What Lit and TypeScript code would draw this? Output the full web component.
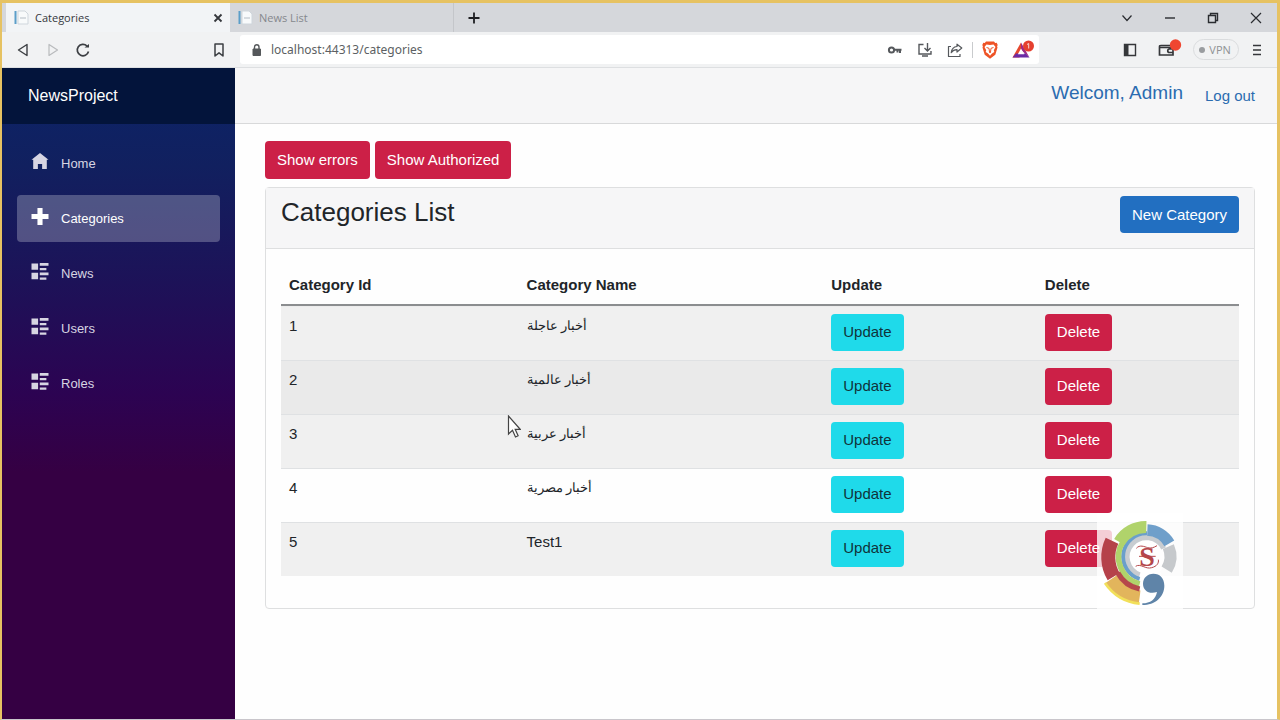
import { LitElement, html, css, svg } from "lit";
import { customElement, property } from "lit/decorators.js";

type IconName = "home" | "plus" | "list";

const navIcons = {
  home: svg`<path d="M4 0l-4 3.200h.8v4.300h2.200v-2.300h2v2.300h2.200v-4.300h.8z"/>`,
  plus: svg`<path d="M2.800 0v2.800h-2.800v2.400h2.800v2.800h2.400v-2.800h2.800v-2.400h-2.800v-2.800z"/>`,
  list: svg`<path d="M0 .2v3h3.100v-3zM3.900 0v1.300h4.100v-1.300zM3.900 2.300v1.100h3.100v-1.100zM0 4.600v3.100h3.100v-3.100zM3.900 4.500v1.300h4.100v-1.300zM3.900 6.800v1.100h3.100v-1.100z"/>`,
};

@customElement("browser-chrome")
class BrowserChrome extends LitElement {
  static styles = css`
    :host {
      display: block;
      font-family: "Open Sans", "Noto Sans", sans-serif;
      color: #3c3f43;
    }
    button {
      display: grid;
      place-items: center;
      border: 0;
      padding: 0;
      margin: 0;
      background: none;
      color: inherit;
      font: inherit;
    }
    svg {
      display: block;
      fill: none;
      stroke: currentColor;
    }
    .tabs {
      display: flex;
      height: 29px;
      padding-left: 4px;
      background: #d5d7db;
    }
    .tab {
      display: flex;
      align-items: center;
      gap: 6px;
      flex: 0 1 224px;
      box-sizing: border-box;
      padding: 0 6px 0 8px;
      font-size: 11px;
      color: #85888d;
      border-right: 1px solid #c4c6ca;
    }
    .tab.active {
      background: #f2f4f6;
      color: #35383c;
      border-right: 0;
    }
    .title {
      flex: 1;
    }
    .add {
      width: 40px;
      color: #1e1f22;
    }
    .window {
      display: flex;
      margin-left: auto;
      color: #2a2c30;
    }
    .window button {
      width: 43px;
    }
    .toolbar {
      display: flex;
      align-items: center;
      height: 36px;
      box-sizing: border-box;
      background: #f1f2f3;
      border-bottom: 1px solid #dddfe1;
    }
    .nav {
      display: flex;
      align-items: center;
      width: 238px;
      box-sizing: border-box;
      padding: 0 8px 0 6px;
    }
    .nav button {
      width: 30px;
    }
    .nav .mark {
      margin-left: auto;
      width: 26px;
    }
    .disabled {
      color: #b9bbbd;
    }
    .address {
      display: flex;
      align-items: center;
      flex: 1;
      height: 29px;
      padding: 0 4px 0 10px;
      gap: 8px;
      background: #fff;
      border-radius: 3px;
      box-sizing: border-box;
    }
    .address input {
      flex: 1;
      min-width: 0;
      border: 0;
      padding: 0;
      outline: 0;
      background: none;
      font: 12px "Noto Sans", "Open Sans", sans-serif;
      color: #5c5f63;
    }
    .actions {
      display: flex;
      align-items: center;
      color: #55585c;
    }
    .actions button {
      width: 30px;
    }
    .rule {
      width: 1px;
      height: 16px;
      margin: 0 2px;
      background: #c9cbcd;
    }
    .side {
      display: flex;
      align-items: center;
      width: 238px;
      box-sizing: border-box;
      padding: 0 12px 0 76px;
      color: #35373a;
      justify-content: space-between;
    }
    .side .vpn {
      display: flex;
      align-items: center;
      gap: 4px;
      height: 21px;
      padding: 0 7px 0 5px;
      border: 1px solid #dadcde;
      border-radius: 11px;
      font-size: 11px;
      color: #8e9194;
    }
    .dot {
      width: 6px;
      height: 6px;
      border-radius: 50%;
      background: #999c9f;
    }
  `;

  private page() {
    return html`<svg width="15" height="15" viewBox="0 0 15 15" aria-hidden="true">
      <path d="M4 1h7l3 3v10H4z" fill="#f8fafb" stroke="#cfd6dc" stroke-width="1" />
      <path d="M6 8h6" stroke="#b4bcc4" />
      <path d="M1.500 1v13" stroke="#5b9ec9" stroke-width="2" />
    </svg>`;
  }

  render() {
    return html`
      <div class="tabs">
        <div class="tab active">
          ${this.page()}<span class="title">Categories</span>
          <button aria-label="Close tab">
            <svg width="12" height="12" viewBox="0 0 12 12" stroke-width="1.8"><path d="M2.500 2.500l7 7m0-7l-7 7" /></svg>
          </button>
        </div>
        <div class="tab">${this.page()}<span class="title">News List</span></div>
        <button class="add" aria-label="New tab">
          <svg width="14" height="14" viewBox="0 0 14 14" stroke-width="1.8"><path d="M7 1.500v11M1.500 7h11" /></svg>
        </button>
        <div class="window">
          <button aria-label="Search tabs">
            <svg width="14" height="14" viewBox="0 0 14 14" stroke-width="1.2"><path d="M2.500 4.500L7 9.500l4.500-5" /></svg>
          </button>
          <button aria-label="Minimize">
            <svg width="14" height="14" viewBox="0 0 14 14" stroke-width="1.4"><path d="M2 7h10" /></svg>
          </button>
          <button aria-label="Restore">
            <svg width="14" height="14" viewBox="0 0 14 14" stroke-width="1.4"><path d="M2.500 4.500h7v7h-7zM4.500 4.500v-2h7v7h-2" /></svg>
          </button>
          <button aria-label="Close">
            <svg width="14" height="14" viewBox="0 0 14 14" stroke-width="1.2"><path d="M2 2l10 10M12 2L2 12" /></svg>
          </button>
        </div>
      </div>
      <div class="toolbar">
        <div class="nav">
          <button aria-label="Back">
            <svg width="16" height="16" viewBox="0 0 16 16" stroke-width="1.400" stroke-linejoin="round"><path d="M12 2.500v11L3.500 8z" /></svg>
          </button>
          <button class="disabled" aria-label="Forward">
            <svg width="16" height="16" viewBox="0 0 16 16" stroke-width="1.200" stroke-linejoin="round"><path d="M4 2.500v11L12.500 8z" /></svg>
          </button>
          <button aria-label="Reload">
            <svg width="16" height="16" viewBox="0 0 16 16" stroke-width="1.700"><path d="M13.500 9.500a5.700 5.700 0 1 1-1.500-5.500" /><path d="M9.500 5.500h4.500V2z" fill="currentColor" stroke="none" /></svg>
          </button>
          <button class="mark" aria-label="Bookmark">
            <svg width="14" height="16" viewBox="0 0 14 16" stroke-width="1.500" stroke-linejoin="round"><path d="M3 2h8v12l-4-3.200L3 14z" /></svg>
          </button>
        </div>
        <div class="address">
          <svg width="13" height="14" viewBox="0 0 13 14" color="#55585b"><path d="M3 6h7.500v6.500H3z" fill="currentColor" /><path d="M4.500 6V4a2.200 2.200 0 0 1 4.500 0v2" stroke-width="1.400" /></svg>
          <input aria-label="Address" value="localhost:44313/categories" />
          <div class="actions">
            <button aria-label="Passwords">
              <svg width="16" height="14" viewBox="0 0 16 14" stroke-width="2"><circle cx="4.500" cy="7" r="2.600" /><path d="M7 6.800h7.500M13 7v3M10.500 7v2.500" /></svg>
            </button>
            <button aria-label="Install">
              <svg width="16" height="16" viewBox="0 0 16 16" stroke-width="1.400"><path d="M6.500 2.500H2v9.500h12V9M5 14h6M10.500 1v7.500M7.500 6l3 3 3-3" /></svg>
            </button>
            <button aria-label="Share">
              <svg width="16" height="16" viewBox="0 0 16 16" stroke-width="1.200" stroke-linejoin="round"><path d="M4 4.500H1.500v10H13V12M10 2.200L14.800 6 10 10V7.700c-3 0-4.500 1-5.800 3C4.600 7 6.800 4.800 10 4.500z" /></svg>
            </button>
            <span class="rule"></span>
            <button aria-label="Shields">
              <svg width="18" height="20" viewBox="0 0 18 20" stroke="none"><path d="M5 1.500h8l1.200 1.400 1.500-.2 1 2.300-.6 1.200.4 1.300-2.200 7.300L9 18.800l-5.300-4L1.500 7.500l.4-1.300L1.300 5l1-2.300 1.500.2z" fill="#ee5326" stroke="none" /><path d="M5.500 4.500L9 5l3.500-.5 2 2.500-1.700 3.300.5 1.700-2.300 1.600L9 15.800l-2-2.200L4.700 12l.5-1.700L3.500 7z" fill="#fff" stroke="none" /><path d="M5.500 7.500l2.500.8.5 3.700L9 13l.5-1 .5-3.700 2.500-.8" stroke="#ee5326" stroke-width="1" /></svg>
            </button>
            <button aria-label="Rewards">
              <svg width="30" height="20" viewBox="-7 0 30 20">
                <g stroke="none">
                  <path d="M9 2.500L.5 17.500h7L9 9z" fill="#e5482e" /><path d="M9 2.500l8.500 15L9 10z" fill="#a02a83" /><path d="M.5 17.500h17l-4-4H4z" fill="#6b2aa5" /><path d="M9 8.500l-3.200 5.800h6.500z" fill="#fff" />
                  <circle cx="16.500" cy="6" r="5.500" fill="#e5402f" />
                </g>
                <path d="M15 4.500l1.700-1v5" fill="none" stroke="#fbd5d0" stroke-width="1" />
              </svg>
            </button>
          </div>
        </div>
        <div class="side">
          <button aria-label="Sidebar">
            <svg width="30" height="16" viewBox="0 0 30 16" stroke-width="1.400"><path d="M9.500 2.500h11v11h-11z" /><path d="M9 2h4.500v12H9z" fill="currentColor" stroke="none" /></svg>
          </button>
          <button aria-label="Wallet">
            <svg width="28" height="22" viewBox="-2 0 28 22" stroke-width="1.700"><path d="M16 6.500H4c-1.500 0-1.500 0-1.500 2v7.500h13.500v-2.500M2.500 8.500h13M16 10h-3.500a1.700 1.700 0 0 0 0 3.500h3.500z" /><circle cx="18.500" cy="6" r="5.700" fill="#ef4630" stroke="none" /></svg>
          </button>
          <button class="vpn"><span class="dot"></span>VPN</button>
          <button aria-label="Menu">
            <svg width="16" height="14" viewBox="4 0 16 14" stroke-width="1.600"><path d="M8 2.500h8M8 7h8M8 11.500h8" /></svg>
          </button>
        </div>
      </div>
    `;
  }
}

@customElement("nav-menu")
class NavMenu extends LitElement {
  static styles = css`
    :host {
      display: block;
      width: 233px;
      flex: none;
      background: linear-gradient(180deg, #0b2468 0%, #11205f 15%, #1d1258 33%, #2c0352 50%, #350043 62%);
    }
    .brand {
      display: flex;
      align-items: center;
      height: 56px;
      padding-left: 26px;
      background: #03143b;
    }
    .brand a {
      color: #fff;
      font-size: 16px;
      text-decoration: none;
    }
    nav {
      display: grid;
      gap: 8px;
      padding: 16px 15px;
    }
    .link {
      display: flex;
      align-items: center;
      gap: 12px;
      height: 47px;
      padding-left: 14px;
      border-radius: 4px;
      font-size: 13px;
      color: #d7d5e2;
      text-decoration: none;
    }
    .link.active {
      background: rgba(255, 255, 255, 0.25);
      color: #fff;
    }
    .link svg {
      width: 18px;
      height: 17px;
      margin-bottom: 4px;
      fill: currentColor;
    }
  `;

  private links: { label: string; icon: IconName; active?: boolean }[] = [
    { label: "Home", icon: "home" },
    { label: "Categories", icon: "plus", active: true },
    { label: "News", icon: "list" },
    { label: "Users", icon: "list" },
    { label: "Roles", icon: "list" },
  ];

  render() {
    return html`
      <div class="brand"><a href="#">NewsProject</a></div>
      <nav>
        ${this.links.map(
          (l) => html`<a class="link ${l.active ? "active" : ""}" href="#${l.label.toLowerCase()}">
            <svg viewBox="0 0 8 8" aria-hidden="true">${navIcons[l.icon]}</svg>${l.label}
          </a>`
        )}
      </nav>
    `;
  }
}

@customElement("channel-mark")
class ChannelMark extends LitElement {
  static styles = css`
    svg {
      display: block;
    }
    .letter {
      font: bold 84px "Liberation Serif", serif;
      fill: #b5474b;
      text-anchor: middle;
    }
  `;

  render() {
    return html`<svg width="86" height="96" viewBox="50 36 258 288" role="img" aria-label="Channel logo">
      <path d="M50 36h258v288H50z" fill="#fff" fill-opacity=".78" />
      <circle cx="198" cy="167" r="60" fill="#fff" />
      <g fill="none">
        <path d="M178 222A58 58 0 1 1 250 142" stroke="#c8ccd0" stroke-width="16" />
        <path d="M178 234A70 70 0 0 1 200 97" stroke="#6a9fcb" stroke-width="12" />
        <path d="M178 249A84 84 0 0 1 128 122" stroke="#b0d36b" stroke-width="17" />
        <path d="M117 123A92 92 0 0 1 198 78" stroke="#b0d36b" stroke-width="36" />
        <path d="M95 119A114 114 0 0 0 100 227" stroke="#b5414a" stroke-width="42" />
        <path d="M92 235A125 125 0 0 0 178 288" stroke="#e2b55c" stroke-width="40" />
        <path d="M74 246A143 143 0 0 0 178 308" stroke="#f2e05a" stroke-width="8" />
        <path d="M112 215A99 99 0 0 0 178 264" stroke="#b5474b" stroke-width="16" />
        <path d="M201 87A80 80 0 0 1 267 127" stroke="#6f9fca" stroke-width="34" />
        <path d="M264 137A74 74 0 0 1 259 206" stroke="#c6c9cc" stroke-width="36" />
      </g>
      <path d="M181 214h60v98h-60z" fill="#fff" />
      <text class="letter" x="200" y="195">S</text>
      <path d="M166 196c14-10 30 10 48 4 16-4 22-14 20-24M168 142c10-12 24-5 34-2s18 0 28-6M176 166h50" fill="none" stroke="#b5474b" stroke-width="3" />
      <path d="M219 218c20 0 33 14 33 36 0 34-28 58-66 58v-5c24 0 40-12 44-34-24 8-42-5-42-25 0-17 13-30 31-30z" fill="#5f84a8" />
    </svg>`;
  }
}

@customElement("categories-page")
class CategoriesPage extends LitElement {
  @property({ attribute: false }) rows: { name: string; arabic: boolean }[] = [
    { name: "أخبار عاجلة", arabic: true },
    { name: "أخبار عالمية", arabic: true },
    { name: "أخبار عربية", arabic: true },
    { name: "أخبار مصرية", arabic: true },
    { name: "Test1", arabic: false },
  ];

  static styles = css`
    :host {
      display: block;
      padding: 17px 22px 0 30px;
      color: #212529;
      font-size: 15px;
    }
    .btn {
      height: 37px;
      padding: 0 12px 1px;
      border: 0;
      border-radius: 4px;
      font: inherit;
      color: #fff;
    }
    .danger {
      background: #cc2047;
    }
    .primary {
      background: #226fc1;
    }
    .info {
      background: #1fdaea;
      color: #10333a;
    }
    .alerts {
      display: flex;
      gap: 5px;
      margin-bottom: 8px;
    }
    .alerts .btn {
      height: 38px;
    }
    .card {
      border: 1px solid #dedfe0;
      border-radius: 4px;
    }
    .head {
      display: flex;
      justify-content: space-between;
      align-items: flex-start;
      padding: 8px 15px 15px;
      background: #f6f6f7;
      border-bottom: 1px solid #dedfe0;
    }
    h1 {
      margin: 0;
      font-size: 26px;
      font-weight: 400;
      line-height: 32px;
    }
    .body {
      padding: 15px 15px 32px;
    }
    table {
      width: 100%;
      table-layout: fixed;
      border-collapse: separate;
      border-spacing: 0;
    }
    th {
      box-sizing: border-box;
      padding: 9px 8px 7px;
      text-align: left;
      line-height: 24px;
      border-bottom: 2px solid #8b8d8f;
    }
    td {
      padding: 7px 8px 9px;
      vertical-align: top;
      line-height: 24px;
      border-top: 1px solid #dfe1e3;
    }
    td .btn {
      display: block;
    }
    .arabic {
      font-size: 13px;
    }
    .id {
      width: 24.8%;
    }
    .name {
      width: 31.8%;
    }
    .upd {
      width: 22.3%;
    }
    tbody tr:nth-child(odd) {
      background: #f0f0f0;
    }
    tbody tr:nth-child(2) {
      background: #eaeaea;
    }
    tbody tr:first-child td {
      border-top-color: #ececec;
    }
  `;

  render() {
    return html`
      <div class="alerts">
        <button class="btn danger">Show errors</button>
        <button class="btn danger">Show Authorized</button>
      </div>
      <section class="card">
        <div class="head">
          <h1>Categories List</h1>
          <button class="btn primary">New Category</button>
        </div>
        <div class="body">
          <table>
            <thead>
              <tr>
                <th class="id">Category Id</th>
                <th class="name">Category Name</th>
                <th class="upd">Update</th>
                <th>Delete</th>
              </tr>
            </thead>
            <tbody>
              ${this.rows.map(
                (row, i) => html`<tr>
                  <td>${i + 1}</td>
                  <td class=${row.arabic ? "arabic" : ""}>${row.name}</td>
                  <td><button class="btn info">Update</button></td>
                  <td><button class="btn danger">Delete</button></td>
                </tr>`
              )}
            </tbody>
          </table>
        </div>
      </section>
    `;
  }
}

@customElement("app-root")
class AppRoot extends LitElement {
  static styles = css`
    :host {
      display: flex;
      flex-direction: column;
      position: relative;
      box-sizing: border-box;
      min-height: 100vh;
      border: 2px solid #e6c262;
      border-top-width: 3px;
      border-right-width: 3px;
      border-bottom: 1px solid #c9c6cb;
      background: #fefefe;
      font-family: "Liberation Sans", Arial, sans-serif;
    }
    .layout {
      display: flex;
      flex: 1;
    }
    main {
      flex: 1;
      min-width: 0;
    }
    .top {
      display: flex;
      align-items: center;
      justify-content: flex-end;
      gap: 22px;
      height: 56px;
      box-sizing: border-box;
      padding-right: 22px;
      background: #f6f6f7;
      border-bottom: 1px solid #d8d9da;
      color: #2b6cb0;
    }
    .hello {
      margin-bottom: 6px;
      font-size: 19px;
    }
    .logout {
      font-size: 15px;
      color: inherit;
      text-decoration: none;
    }
    .mark {
      position: absolute;
      left: 1095px;
      top: 510px;
    }
    .cursor {
      position: absolute;
      left: 505px;
      top: 412px;
    }
  `;

  render() {
    return html`
      <browser-chrome></browser-chrome>
      <div class="layout">
        <nav-menu></nav-menu>
        <main>
          <div class="top">
            <span class="hello">Welcom, Admin</span>
            <a class="logout" href="#logout">Log out</a>
          </div>
          <categories-page></categories-page>
        </main>
      </div>
      <channel-mark class="mark"></channel-mark>
      <svg class="cursor" width="14" height="24" viewBox="0 0 14 24" aria-hidden="true">
        <path d="M1.500 1v18l4-3.800 3 6.800 2.600-1.200-2.900-6.500h5z" fill="#fff" stroke="#444" stroke-width="1.200" />
      </svg>
    `;
  }
}
